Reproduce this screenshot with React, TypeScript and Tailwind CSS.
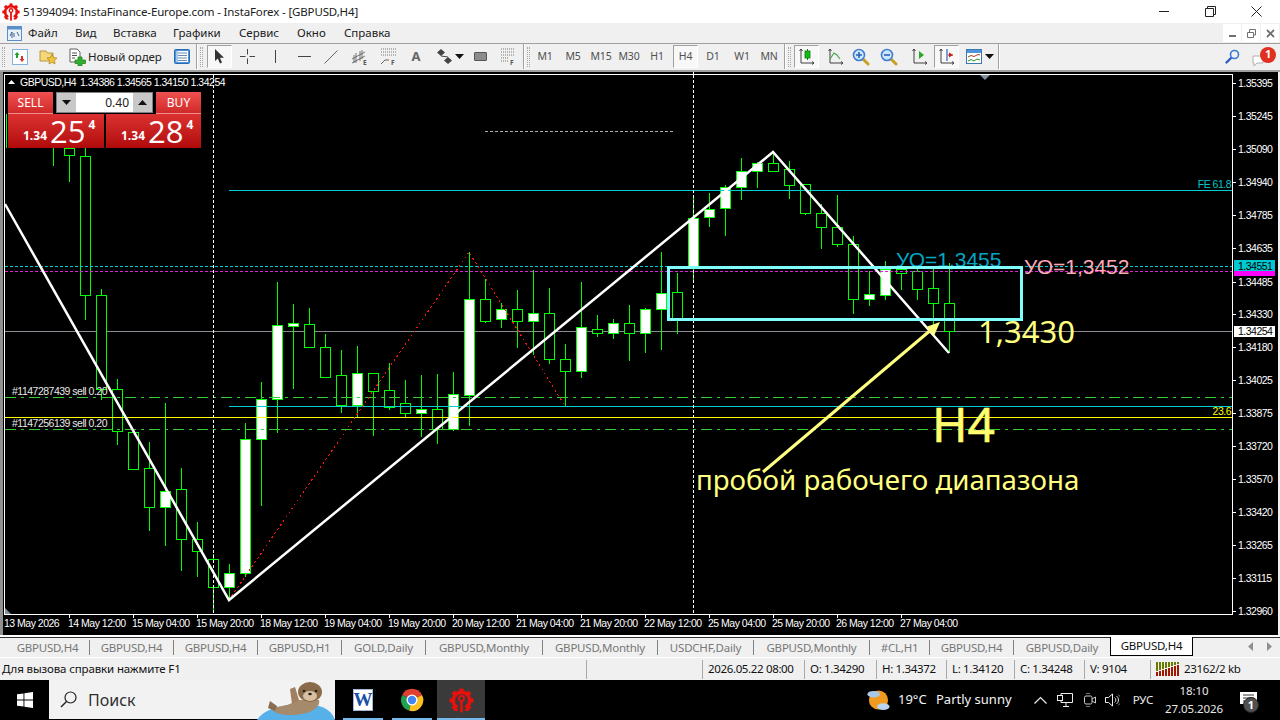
import type { ReactNode } from "react";

type Candle = [number, number, number, number, number, boolean];

// x, high, body top, body bottom, low, filled
const CANDLES: Candle[] = [
    [53, 148, 148, 148, 166, false],
    [69, 148, 148, 155, 182, false],
    [85, 148, 156, 295, 320, false],
    [101, 289, 295, 389, 400, false],
    [117, 379, 389, 431, 445, false],
    [133, 432, 432, 469, 470, false],
    [149, 442, 468, 507, 531, false],
    [165, 403, 491, 507, 546, true],
    [181, 468, 489, 539, 571, false],
    [197, 522, 539, 551, 577, false],
    [213, 554, 559, 587, 610, false],
    [229, 564, 573, 587, 600, true],
    [245, 423, 439, 573, 577, true],
    [261, 382, 399, 439, 506, true],
    [277, 282, 325, 399, 433, true],
    [293, 304, 323, 326, 389, true],
    [309, 308, 324, 347, 348, false],
    [325, 334, 347, 377, 377, false],
    [341, 350, 375, 405, 413, false],
    [357, 346, 373, 405, 417, true],
    [373, 373, 373, 391, 436, false],
    [389, 363, 390, 407, 410, false],
    [405, 380, 403, 413, 417, false],
    [421, 375, 409, 413, 437, true],
    [437, 374, 409, 429, 444, false],
    [453, 372, 394, 429, 431, true],
    [469, 252, 299, 395, 426, true],
    [485, 279, 299, 321, 323, false],
    [501, 303, 309, 319, 328, true],
    [517, 290, 309, 321, 348, false],
    [533, 270, 313, 321, 355, true],
    [549, 288, 313, 359, 364, false],
    [565, 344, 359, 371, 406, false],
    [581, 282, 327, 371, 378, true],
    [597, 315, 329, 333, 337, false],
    [613, 319, 323, 333, 339, true],
    [629, 305, 323, 333, 361, false],
    [645, 308, 309, 333, 353, true],
    [661, 252, 293, 309, 350, true],
    [677, 273, 292, 319, 334, false],
    [693, 198, 218, 266, 281, true],
    [709, 193, 209, 217, 227, true],
    [725, 185, 187, 208, 236, true],
    [741, 158, 171, 187, 200, true],
    [757, 162, 163, 171, 188, true],
    [773, 152, 163, 171, 171, false],
    [789, 161, 169, 185, 199, false],
    [805, 184, 184, 213, 215, false],
    [821, 204, 213, 227, 249, false],
    [837, 195, 227, 244, 247, false],
    [853, 236, 244, 299, 314, false],
    [869, 271, 294, 299, 306, true],
    [885, 261, 269, 295, 300, true],
    [901, 268, 269, 273, 290, false],
    [917, 268, 271, 289, 300, false],
    [933, 269, 288, 303, 332, false],
    [949, 263, 303, 331, 353, false],
];

const PRICES: [string, number][] = [
    ["1.35395", 83],
    ["1.35245", 116],
    ["1.35090", 149],
    ["1.34940", 182],
    ["1.34785", 215],
    ["1.34635", 248],
    ["1.34485", 282],
    ["1.34330", 314],
    ["1.34180", 347],
    ["1.34025", 380],
    ["1.33875", 413],
    ["1.33720", 446],
    ["1.33570", 479],
    ["1.33420", 512],
    ["1.33265", 545],
    ["1.33115", 578],
    ["1.32960", 611],
];

const TIMES: [string, number][] = [
    ["13 May 2026", 4],
    ["14 May 12:00", 68],
    ["15 May 04:00", 132],
    ["15 May 20:00", 196],
    ["18 May 12:00", 260],
    ["19 May 04:00", 324],
    ["19 May 20:00", 388],
    ["20 May 12:00", 452],
    ["21 May 04:00", 516],
    ["21 May 20:00", 580],
    ["22 May 12:00", 644],
    ["25 May 04:00", 708],
    ["25 May 20:00", 772],
    ["26 May 12:00", 836],
    ["27 May 04:00", 900],
];

const TABS: [string, string][] = [
    ["GBPUSD,H4", "w-[84px]"],
    ["GBPUSD,H4", "w-[84px]"],
    ["GBPUSD,H4", "w-[84px]"],
    ["GBPUSD,H1", "w-[84px]"],
    ["GOLD,Daily", "w-[84px]"],
    ["GBPUSD,Monthly", "w-[117px]"],
    ["GBPUSD,Monthly", "w-[115px]"],
    ["USDCHF,Daily", "w-[96px]"],
    ["GBPUSD,Monthly", "w-[116px]"],
    ["#CL,H1", "w-[60px]"],
    ["GBPUSD,H4", "w-[84px]"],
];

const STATUS: [string, string][] = [
    ["2026.05.22 08:00", "w-[102px]"],
    ["O: 1.34290", "w-[72px]"],
    ["H: 1.34372", "w-[70px]"],
    ["L: 1.34120", "w-[68px]"],
    ["C: 1.34248", "w-[70px]"],
    ["V: 9104", "w-[66px]"],
];

const MENU: [string, string][] = [
    ["Файл", "w-[47px]"],
    ["Вид", "w-[38px]"],
    ["Вставка", "w-[60px]"],
    ["Графики", "w-[66px]"],
    ["Сервис", "w-[58px]"],
    ["Окно", "w-[47px]"],
    ["Справка", "w-[60px]"],
];

const TIMEFRAMES: [string, string][] = [
    ["M1", "w-[28px]"],
    ["M5", "w-[28px]"],
    ["M15", "w-[28px]"],
    ["M30", "w-[28px]"],
    ["H1", "w-[28px]"],
];

function Slot({ className, children }: { className: string; children?: ReactNode }) {
    return <div className={"flex h-full shrink-0 items-center justify-center " + className}>{children}</div>;
}

function Grip() {
    return <div className="h-[20px] w-[3px] border-x border-dotted border-[#a8a8a8]" />;
}

function Sep() {
    return <div className="h-full w-[2px] shrink-0 border-l border-r border-l-[#a0a0a0] border-r-white" />;
}

function Pressed({ children, className }: { children: ReactNode; className: string }) {
    return (
        <div className={"flex h-[23px] w-[25px] shrink-0 items-center justify-center border border-t-[#a0a0a0] border-l-[#a0a0a0] border-r-white border-b-white bg-[#f8f8f8] " + className}>
            {children}
        </div>
    );
}

function Gear({ size }: { size: number }) {
    return (
        <svg width={size} height={size} viewBox="0 0 24 24">
            {[0, 45, 90, 135, 225, 270, 315].map((a) => (
                <rect key={a} x="10" y="0.500" width="4" height="5.500" fill="#e8100c" transform={`rotate(${a} 12 12)`} />
            ))}
            <path d="M7.200 18.500 A8 8 0 1 1 16.800 18.500" fill="none" stroke="#e8100c" strokeWidth="3.200" />
            <circle cx="12" cy="10" r="2.400" fill="none" stroke="#e8100c" strokeWidth="1.800" />
            <rect x="10.800" y="12" width="2.400" height="11.500" fill="#e8100c" />
            <path d="M5 21H8.500M15.500 21H19" stroke="#e8100c" strokeWidth="2.200" />
        </svg>
    );
}

function Caret({ up = false }: { up?: boolean }) {
    return (
        <svg width="9" height="5" viewBox="0 0 9 5">
            <path d={up ? "M4.500 0 9 5H0Z" : "M0 0H9L4.500 5Z"} fill="#111" />
        </svg>
    );
}

function ZoomIcon({ plus }: { plus: boolean }) {
    return (
        <svg width="18" height="18" viewBox="0 0 18 18">
            <path d="M10.500 10.500 16 16" stroke="#c8a020" strokeWidth="3" strokeLinecap="round" />
            <circle cx="7" cy="7" r="5.500" fill="#cfe6fa" stroke="#3f7fd0" strokeWidth="1.600" />
            <path d={plus ? "M4 7H10M7 4V10" : "M4 7H10"} stroke="#2a62b8" strokeWidth="1.600" />
        </svg>
    );
}

function Axes({ children }: { children?: ReactNode }) {
    return (
        <svg width="17" height="17" viewBox="0 0 17 17">
            <path d="M3 1V15H16M1.500 3 3 1 4.500 3M14 13.500 16 15 14 16.500" fill="none" stroke="#404040" strokeWidth="1" />
            {children}
        </svg>
    );
}

function Toolbar() {
    const tf = "text-[10.500px] tracking-[-0.200px] text-[#505050]";
    return (
        <div className="flex h-[28px] shrink-0 items-center border-b-2 border-b-[#a0a0a0] bg-[#f0f0f0] pb-[1px] pl-[4px] text-[11.500px] tracking-[-0.100px] text-[#222]">
            <div className="-ml-[2px] mr-[-1px] flex h-full items-center"><Grip /></div>
            <Slot className="w-[32px]">
                <svg width="16" height="16" viewBox="0 0 16 16">
                    <rect x="0.500" y="0.500" width="15" height="15" fill="#fff" stroke="#7fb4e0" />
                    <path d="M5 3 2.500 6H4V9H6V6H7.500Z" fill="#24a024" />
                    <path d="M10 13 12.500 10H11V7H9V10H7.500Z" fill="#d83030" />
                </svg>
            </Slot>
            <Slot className="w-[24px]">
                <svg width="19" height="17" viewBox="0 0 19 17">
                    <path d="M1 3H7L8.500 5H14V13H1Z" fill="#f3d77a" stroke="#b89840" />
                    <path d="M13 6 14.500 9.500 18 10 15.500 12.500 16 16 13 14.300 10 16 10.500 12.500 8 10 11.500 9.500Z" fill="#f2c23a" stroke="#a88420" strokeWidth="0.700" />
                </svg>
            </Slot>
            <Slot className="w-[108px] justify-start pl-[9px]">
                <svg width="17" height="18" viewBox="0 0 17 18" className="mr-[2px] shrink-0">
                    <path d="M1 1H8L11 4V14H1Z" fill="#fff" stroke="#606060" />
                    <path d="M3 5H8M3 7.500H8M3 10H6" stroke="#505050" />
                    <path d="M9 9H13V12H16.500V15.500H13V18H9V15.500H6V12H9Z" fill="#30b030" stroke="#1a7a1a" strokeWidth="0.700" />
                </svg>
                <span className="whitespace-nowrap">Новый ордер</span>
            </Slot>
            <Slot className="w-[28px]">
                <svg width="16" height="15" viewBox="0 0 16 15">
                    <rect x="0.500" y="0.500" width="15" height="14" rx="1" fill="#4f93d8" stroke="#2a6ab0" />
                    <rect x="2" y="2" width="12" height="11" fill="#fff" />
                    <path d="M4 4H13M4 6.500H13M4 9H13M4 11.500H13" stroke="#6a8ab0" />
                    <path d="M3 2V13" stroke="#4f93d8" />
                </svg>
            </Slot>
            <Sep />
            <Slot className="w-[6px]"><Grip /></Slot>
            <Pressed className="ml-[3px]">
                <svg width="11" height="15" viewBox="0 0 11 15">
                    <path d="M1 0V12L3.800 9.500 6 14.500 8 13.500 6 8.800H10Z" fill="#333" />
                </svg>
            </Pressed>
            <Slot className="w-[30px]">
                <svg width="15" height="15" viewBox="0 0 15 15">
                    <path d="M7.500 0V5.500M7.500 9.500V15M0 7.500H5.500M9.500 7.500H15" stroke="#444" />
                </svg>
            </Slot>
            <Slot className="w-[26px]"><div className="h-[13px] w-[1px] bg-[#444]" /></Slot>
            <Slot className="w-[32px]"><div className="h-[1px] w-[13px] bg-[#444]" /></Slot>
            <Slot className="w-[22px]">
                <svg width="14" height="14" viewBox="0 0 14 14"><path d="M0.500 13.500 13.500 0.500" stroke="#666" /></svg>
            </Slot>
            <Slot className="w-[36px]">
                <svg width="18" height="18" viewBox="0 0 18 18">
                    <path d="M1 11 14 4M1 15 14 8M5 5V15M9 3V13M3 7V15M11 2V11" stroke="#555" strokeWidth="0.800" />
                    <text x="12" y="17" fontSize="6.500" fontWeight="700" fill="#555">E</text>
                </svg>
            </Slot>
            <Slot className="w-[20px]">
                <svg width="17" height="18" viewBox="0 0 17 18">
                    <path d="M1 1H16M1 4H16M1 7H16" stroke="#777" strokeDasharray="1 1" />
                    <path d="M1 16 5 12H9" fill="none" stroke="#666" />
                    <text x="11" y="17" fontSize="6.500" fontWeight="700" fill="#555">F</text>
                </svg>
            </Slot>
            <Slot className="w-[36px]"><span className="text-[13px] font-bold text-[#666]">A</span></Slot>
            <Slot className="w-[20px]">
                <svg width="15" height="15" viewBox="0 0 15 15">
                    <path d="M4 0 8 3.500 4 7 0 3.500ZM11 8 15 11.500 11 15 7 11.500Z" fill="#444" />
                    <path d="M4 7 11 8" stroke="#444" />
                </svg>
            </Slot>
            <Slot className="w-[10px]"><Caret /></Slot>
            <Slot className="w-[32px]"><div className="h-[9px] w-[13px] rounded-[1px] border border-[#555] bg-[#8c8c8c]" /></Slot>
            <Slot className="w-[24px]">
                <svg width="15" height="18" viewBox="0 0 15 18">
                    <path d="M0 1H14M0 4H14M0 7H14M0 10H8M0 13H8" stroke="#777" strokeDasharray="1 1" />
                    <text x="9" y="17" fontSize="6.500" fontWeight="700" fill="#555">F</text>
                </svg>
            </Slot>
            <div className="w-[3px] shrink-0" />
            <Sep />
            <Slot className="w-[6px]"><Grip /></Slot>
            {TIMEFRAMES.map(([label, w]) => (
                <Slot key={label} className={w}><span className={tf}>{label}</span></Slot>
            ))}
            <Pressed className="ml-[2px]"><span className={tf}>H4</span></Pressed>
            <Slot className="w-[30px]"><span className={tf}>D1</span></Slot>
            <Slot className="w-[28px]"><span className={tf}>W1</span></Slot>
            <Slot className="w-[26px]"><span className={tf}>MN</span></Slot>
            <div className="w-[2px] shrink-0" />
            <Sep />
            <Slot className="w-[6px]"><Grip /></Slot>
            <Pressed className="ml-[2px]">
                <Axes>
                    <path d="M9.500 1V12" stroke="#108010" />
                    <rect x="7" y="3" width="5" height="7" fill="#10c010" stroke="#107010" strokeWidth="0.800" />
                </Axes>
            </Pressed>
            <Slot className="w-[32px]">
                <Axes><path d="M3 11 7 5 10 7 13 11" fill="none" stroke="#48a848" strokeWidth="1.200" /></Axes>
            </Slot>
            <Slot className="w-[20px]"><ZoomIcon plus /></Slot>
            <Slot className="w-[36px]"><ZoomIcon plus={false} /></Slot>
            <Slot className="w-[24px]">
                <Axes><path d="M8 3V11L13 7Z" fill="#2aa82a" /></Axes>
            </Slot>
            <Pressed className="ml-[3px]">
                <Axes>
                    <path d="M9 1V13" stroke="#2a62b8" strokeWidth="1.200" />
                    <path d="M15 7 11 4.500V9.500Z" fill="#c82020" />
                    <path d="M15 7H10" stroke="#c82020" />
                </Axes>
            </Pressed>
            <Slot className="w-[30px]">
                <svg width="16" height="15" viewBox="0 0 16 15">
                    <rect x="0.500" y="0.500" width="15" height="14" fill="#fff" stroke="#3a78b8" />
                    <rect x="1" y="1" width="14" height="3" fill="#4f93d8" />
                    <path d="M2 8 5 6.500 8 7.500 12 5.500 14 6" fill="none" stroke="#a04020" />
                    <path d="M2 12 5 10.500 8 12 11 10 14 11" fill="none" stroke="#309030" />
                </svg>
            </Slot>
            <Slot className="-ml-[5px] w-[10px]"><Caret /></Slot>
            <div className="w-[4px] shrink-0" />
            <Sep />
            <Slot className="ml-auto w-[16px]">
                <svg width="15" height="15" viewBox="0 0 15 15">
                    <path d="M6 9 1.500 13.500" stroke="#2a5fc0" strokeWidth="2.400" strokeLinecap="round" />
                    <circle cx="9.500" cy="5.500" r="4" fill="none" stroke="#3a78d8" strokeWidth="1.600" />
                </svg>
            </Slot>
            <Slot className="ml-[11px] mr-[4px] w-[25px]">
                <div className="relative h-[22px] w-[25px]">
                    <svg width="14" height="14" viewBox="0 0 14 14" className="absolute bottom-[0px] left-[0px]">
                        <path d="M2 2H12V9H6L3 12V9H2Z" fill="#fff" stroke="#b0b0b0" />
                    </svg>
                    <div className="absolute right-[0px] top-[1px] flex h-[16px] w-[16px] items-center justify-center rounded-full bg-[#e03020] text-[11px] font-bold text-white">1</div>
                </div>
            </Slot>
        </div>
    );
}

function Chart() {
    const tx = "font-['Liberation_Sans',sans-serif] text-[10.500px] tracking-[-0.500px]";
    return (
        <svg width="1280" height="563" viewBox="0 72 1280 563" className="block">
            <rect x="0" y="72" width="1280" height="563" fill="#000" />
            <rect x="0" y="72" width="3" height="563" fill="#909090" />
            <rect x="1278" y="72" width="2" height="563" fill="#f0f0f0" />

            <g shapeRendering="crispEdges">
                <rect x="4.500" y="74.500" width="1228" height="540" fill="none" stroke="#fff" />
                {PRICES.map(([, y]) => (
                    <rect key={y} x="1233" y={y} width="3" height="1" fill="#fff" />
                ))}
                {TIMES.slice(1).map(([, x]) => (
                    <rect key={x} x={x + 1} y="614" width="1" height="4" fill="#fff" />
                ))}
                <rect x="693" y="72" width="1" height="3" fill="#fff" />
                <rect x="5" y="331" width="1227" height="1" fill="#8a8a92" />
                <rect x="6" y="114" width="1" height="34" fill="#00ff00" />

                {CANDLES.map(([x, hi, top, bottom, lo, filled]) => (
                    <g key={x}>
                        <path d={`M${x + 0.5} ${hi}V${lo}`} stroke="#00ff00" />
                        {bottom > top && (
                            <rect x={x - 4.5} y={top + 0.5} width="10" height={bottom - top} fill={filled ? "#fff" : "#000"} stroke="#00ff00" />
                        )}
                    </g>
                ))}

                <path d="M5 266.500H1232" stroke="#00ced1" strokeDasharray="3 2" />
                <path d="M5 271.500H1232" stroke="#e020e0" strokeDasharray="3 2" />
                <path d="M5 397.500H1232M5 429.500H1232" stroke="#32cd32" strokeDasharray="11 5 3 5" />
                <path d="M5 417.500H1232" stroke="#ffff00" />
                <path d="M229 190.500H1232M229 406.500H1232" stroke="#00ced1" />
                <path d="M213.500 75V614M693.500 75V614" stroke="#fff" strokeDasharray="3 2" />
                <path d="M485 131.500H674" stroke="#b0b0b0" strokeDasharray="3 2" />
                <path d="M229 600 469 252 565 406" fill="none" stroke="#ff1010" strokeDasharray="2 3" />
            </g>

            <path d="M5 204 229 600 773 152 949 353" fill="none" stroke="#fff" strokeWidth="2.500" />

            <text x="896" y="267" className="font-['Liberation_Sans',sans-serif] text-[21px]" fill="#00a8c4">УО=1,3455</text>
            <text x="1024" y="274" className="font-['Liberation_Sans',sans-serif] text-[21px]" fill="#ffa8b8">УО=1,3452</text>

            <rect x="668.500" y="267.500" width="353" height="51.500" fill="none" stroke="#80ffff" strokeWidth="3" shapeRendering="crispEdges" />

            <path d="M763 472 932 329" stroke="#ffff80" strokeWidth="3" />
            <path d="M940 322 926 327 934 336Z" fill="#ffff80" />

            <text x="978" y="343" className="font-['Noto_Sans',sans-serif] text-[31px]" fill="#ffff80">1,3430</text>
            <text x="932" y="442" stroke="#ffff70" strokeWidth="0.500" className="font-['Noto_Sans',sans-serif] text-[48px]" fill="#ffff70">H4</text>
            <text x="696" y="490" className="font-['Noto_Sans',sans-serif] text-[27.700px]" fill="#ffff80">пробой рабочего диапазона</text>

            <path d="M8 84 11.500 80 15 84Z" fill="#fff" />
            <text x="20" y="86" className={tx} fill="#fff">GBPUSD,H4</text>
            <text x="80" y="86" className={tx} fill="#fff">1.34386 1.34565 1.34150 1.34254</text>
            <text x="12" y="395" className={tx} fill="#e8e8e8">#1147287439 sell 0.20</text>
            <text x="12" y="427" className={tx} fill="#e8e8e8">#1147256139 sell 0.20</text>
            <text x="1231" y="188" textAnchor="end" className={tx} fill="#00c8cc">FE 61.8</text>
            <text x="1231" y="415" textAnchor="end" className={tx} fill="#ffff00">23.6</text>

            {PRICES.map(([p, y]) => (
                <text key={p} x="1238" y={y + 4} className={tx} fill="#fff">{p}</text>
            ))}
            {TIMES.map(([t, x]) => (
                <text key={t} x={x} y="627" className={tx} fill="#fff">{t}</text>
            ))}

            <rect x="1234" y="266" width="41" height="10" fill="#ff00ff" />
            <rect x="1234" y="260" width="41" height="11" fill="#00c8d0" />
            <text x="1238" y="270" className={tx} fill="#000">1.34551</text>
            <rect x="1234" y="326" width="41" height="11" fill="#fff" />
            <text x="1238" y="335" className={tx} fill="#000">1.34254</text>

            <path d="M980 75H990L985 80Z" fill="#8090a0" />
            <path d="M5 608 11 614H5Z" fill="#8090a0" />
        </svg>
    );
}

function PriceBlock({ big, className }: { big: string; className: string }) {
    return (
        <div className={"flex h-[34px] items-center bg-gradient-to-b from-[#dc3030] to-[#b00808] font-['Open_Sans',sans-serif] text-white " + className}>
            <span className="mt-[10px] text-[12px] font-bold">1.34</span>
            <span className="ml-[3px] text-[31px] leading-none">{big}</span>
            <span className="mb-[12px] ml-[3px] text-[12px] font-bold">4</span>
        </div>
    );
}

function TradePanel() {
    const side = "flex h-[22px] w-[45px] items-start justify-center border-b border-b-[#f09090] bg-gradient-to-b from-[#f05050] to-[#d02828] pt-[2px] text-[12px] text-white";
    return (
        <div className="absolute left-[8px] top-[20px] flex w-[193px] flex-col">
            <div className="flex h-[22px] items-start justify-between">
                <div className={side}>SELL</div>
                <div className="flex h-[21px] w-[97px] items-center border border-[#808080] bg-[#c8c8c8]">
                    <div className="flex h-full w-[19px] items-center justify-center"><Caret /></div>
                    <div className="flex h-full flex-1 items-center justify-end bg-white pr-[4px] text-[12px] text-[#222]">0.40</div>
                    <div className="flex h-full w-[19px] items-center justify-center"><Caret up /></div>
                </div>
                <div className={side}>BUY</div>
            </div>
            <div className="flex justify-between">
                <PriceBlock big="25" className="w-[96px] pl-[15px]" />
                <PriceBlock big="28" className="w-[95px] pl-[15px]" />
            </div>
        </div>
    );
}

function Otter() {
    return (
        <svg width="78" height="40" viewBox="0 0 78 40" className="ml-auto shrink-0">
            <path d="M0 40C6 30 24 24 46 24C62 24 74 28 78 40Z" fill="#58b0e8" />
            <path d="M14 28C24 26 32 26 40 20L62 20C64 28 52 35 34 35C24 35 18 34 14 28Z" fill="#a58a6c" />
            <path d="M13 21 20 26 18 31 11 28Z" fill="#8a6c4e" />
            <path d="M33 9 38 7 42 20 35 24Z" fill="#a08060" />
            <ellipse cx="53" cy="12" rx="12" ry="10" fill="#8a6a48" />
            <ellipse cx="53" cy="16" rx="7" ry="5" fill="#d8c0a0" />
            <circle cx="47" cy="11" r="1.300" fill="#222" />
            <circle cx="59" cy="11" r="1.300" fill="#222" />
            <ellipse cx="53" cy="14" rx="1.800" ry="1.200" fill="#222" />
        </svg>
    );
}

function Taskbar() {
    return (
        <div className="flex h-[40px] shrink-0 items-stretch bg-black text-white">
            <Slot className="w-[49px]">
                <svg width="16" height="16" viewBox="0 0 16 16">
                    <path d="M0 2.300 6.500 1.400V7.600H0ZM7.400 1.300 16 0V7.600H7.400ZM0 8.400H6.500V14.600L0 13.700ZM7.400 8.400H16V16L7.400 14.700Z" fill="#fff" />
                </svg>
            </Slot>
            <div className="flex h-[39px] w-[286px] shrink-0 items-center bg-[#f2f2f2] pl-[11px] text-[16px] text-[#303030]">
                <svg width="17" height="17" viewBox="0 0 17 17" className="shrink-0">
                    <circle cx="10.500" cy="6.500" r="5.500" fill="none" stroke="#222" strokeWidth="1.200" />
                    <path d="M6.500 10.500 1 16" stroke="#222" strokeWidth="1.400" />
                </svg>
                <span className="ml-[11px]">Поиск</span>
                <Otter />
            </div>
            <div className="w-[8px] shrink-0" />
            <Slot className="relative w-[40px]">
                <div className="flex h-[22px] w-[20px] items-center justify-center border border-[#a0b8d8] bg-white font-['Liberation_Serif',serif] text-[19px] font-bold text-[#1a50a8]">W</div>
                <div className="absolute bottom-[0px] left-[0px] right-[0px] h-[2px] bg-[#76b9ed]" />
            </Slot>
            <div className="w-[9px] shrink-0" />
            <Slot className="relative w-[40px]">
                <svg width="24" height="24" viewBox="0 0 24 24">
                    <path d="M12 12 2.200 7A11 11 0 0 1 22 7Z" fill="#e04030" />
                    <path d="M12 12 2.200 7A11 11 0 0 0 9 22.600Z" fill="#20a050" />
                    <path d="M12 12 22 7A11 11 0 0 1 9 22.600Z" fill="#fbc020" />
                    <circle cx="12" cy="12" r="5.500" fill="#fff" />
                    <circle cx="12" cy="12" r="4.200" fill="#4285f4" />
                </svg>
                <div className="absolute bottom-[0px] left-[0px] right-[0px] h-[2px] bg-[#76b9ed]" />
            </Slot>
            <div className="w-[5px] shrink-0" />
            <Slot className="relative w-[48px] bg-[#3a3a3a]">
                <Gear size={25} />
                <div className="absolute bottom-[0px] left-[0px] right-[0px] h-[2px] bg-[#76b9ed]" />
            </Slot>
            <div className="flex-1" />
            <Slot className="w-[24px]">
                <svg width="25" height="26" viewBox="0 0 25 26">
                    <circle cx="13" cy="13" r="10" fill="#f09a20" />
                    <ellipse cx="8" cy="7" rx="6.500" ry="3.500" fill="#a8c8e8" />
                    <ellipse cx="18" cy="20" rx="6.500" ry="3.500" fill="#b8d4f0" />
                </svg>
            </Slot>
            <div className="w-[8px] shrink-0" />
            <div className="flex items-center text-[13px] text-[#f4f4f4]">
                <span className="w-[38px]">19°C</span>
                <span className="w-[98px] whitespace-nowrap">Partly sunny</span>
            </div>
            <Slot className="w-[13px]">
                <svg width="13" height="8" viewBox="0 0 13 8"><path d="M0.500 7.500 6.500 1.500 12.500 7.500" fill="none" stroke="#eee" strokeWidth="1.200" /></svg>
            </Slot>
            <Slot className="ml-[10px] w-[16px]">
                <svg width="16" height="14" viewBox="0 0 16 14">
                    <path d="M4 0.500H15.500V9.500H4ZM0.500 2.500H6M9 9.500V13M6 13.500H12" fill="none" stroke="#eee" />
                    <rect x="0.500" y="2.500" width="5" height="5" fill="#000" stroke="#eee" />
                </svg>
            </Slot>
            <Slot className="ml-[11px] w-[12px]">
                <svg width="12" height="16" viewBox="0 0 12 16">
                    <rect x="0.500" y="4" width="7.500" height="8" rx="1.500" fill="none" stroke="#ccc" />
                    <path d="M8 7 11.500 5V11L8 9" fill="none" stroke="#ccc" />
                    <path d="M2 1.500H6M2 14.500H6" stroke="#777" />
                </svg>
            </Slot>
            <Slot className="ml-[9px] w-[15px]">
                <svg width="15" height="14" viewBox="0 0 15 14">
                    <path d="M0.500 4.500H3.500L7.500 1V13L3.500 9.500H0.500Z" fill="none" stroke="#eee" />
                    <path d="M9.500 4.500A3 3 0 0 1 9.500 9.500M11.500 3A5 5 0 0 1 11.500 11" fill="none" stroke="#ddd" />
                    <path d="M13.300 1.500A7 7 0 0 1 13.300 12.500" fill="none" stroke="#777" />
                </svg>
            </Slot>
            <Slot className="ml-[12px] w-[22px] text-[11.500px] text-[#e8e8e8]">РУС</Slot>
            <div className="ml-[9px] flex w-[62px] shrink-0 flex-col items-center justify-center text-[11.500px] leading-[18px] tracking-[-0.100px] text-[#e8e8e8]">
                <span>18:10</span>
                <span>27.05.2026</span>
            </div>
            <Slot className="relative ml-[13px] mr-[22px] w-[20px]">
                <svg width="17" height="16" viewBox="0 0 17 16">
                    <path d="M0 0H17V12H8L5 15V12H0Z" fill="#fff" />
                    <path d="M3 3H14M3 6H14M3 9H10" stroke="#333" />
                </svg>
                <div className="absolute bottom-[7px] right-[-1px] flex h-[16px] w-[16px] items-center justify-center rounded-full border border-[#222] bg-[#505050] text-[11px] font-bold text-white">1</div>
            </Slot>
        </div>
    );
}

export default function App() {
    return (
        <div className="flex h-[720px] w-[1280px] flex-col overflow-hidden bg-[#f0f0f0] font-['Noto_Sans',sans-serif]">
            {/* Title bar */}
            <div className="flex h-[23px] shrink-0 items-center bg-white pl-[2px] text-[11.500px] tracking-[-0.140px] text-[#202020]">
                <Gear size={18} />
                <span className="ml-[3px] whitespace-nowrap">51394094: InstaFinance-Europe.com - InstaForex - [GBPUSD,H4]</span>
                <Slot className="ml-auto w-[46px]"><div className="h-[1px] w-[10px] bg-[#222]" /></Slot>
                <Slot className="w-[46px]">
                    <svg width="11" height="11" viewBox="0 0 11 11"><path d="M0.500 2.500H8.500V10.500H0.500ZM2.500 2.500V0.500H10.500V8.500H8.500" fill="none" stroke="#222" /></svg>
                </Slot>
                <Slot className="w-[47px]">
                    <svg width="11" height="11" viewBox="0 0 11 11"><path d="M0.500 0.500 10.500 10.500M10.500 0.500 0.500 10.500" stroke="#222" /></svg>
                </Slot>
            </div>

            {/* Menu */}
            <div className="flex h-[21px] shrink-0 items-center border-b border-b-[#a0a0a0] bg-[#f0f0f0] text-[11.500px] text-[#202020]">
                <Slot className="w-[28px]">
                    <svg width="15" height="15" viewBox="0 0 15 15">
                        <rect x="0.500" y="0.500" width="14" height="14" fill="#e8f0fa" stroke="#5a8ec8" />
                        <rect x="1" y="1" width="13" height="2.500" fill="#5a8ec8" />
                        <path d="M3 10 5 6V12M7 7V11M10 6 12 10" fill="none" stroke="#40608a" />
                    </svg>
                </Slot>
                {MENU.map(([label, w]) => (
                    <div key={label} className={"shrink-0 " + w}>{label}</div>
                ))}
                <div className="ml-auto flex h-[18px] items-center gap-[1px] pr-[1px]">
                    <Slot className="w-[18px] bg-white"><div className="mt-[5px] h-[2px] w-[7px] bg-[#707070]" /></Slot>
                    <Slot className="w-[18px] bg-white">
                        <svg width="9" height="9" viewBox="0 0 9 9"><path d="M0.500 3.500H6.500V8.500H0.500ZM2.500 3V0.500H8.500V6H7" fill="none" stroke="#707070" /></svg>
                    </Slot>
                    <Slot className="w-[18px] bg-white">
                        <svg width="9" height="9" viewBox="0 0 9 9"><path d="M1 1 8 8M8 1 1 8" stroke="#707070" strokeWidth="1.800" /></svg>
                    </Slot>
                </div>
            </div>

            <Toolbar />

            {/* Chart */}
            <div className="relative h-[563px] shrink-0">
                <Chart />
                <TradePanel />
            </div>

            {/* Tabs */}
            <div className="h-[2px] shrink-0 bg-white" />
            <div className="flex h-[20px] shrink-0 items-start border-t border-t-[#303030] bg-[#f0f0f0] pl-[6px] text-[11.500px] tracking-[-0.220px] text-[#777]">
                {TABS.map(([label, w], i) => (
                    <div key={i} className={"mt-[2px] flex h-[15px] shrink-0 items-center justify-center border-r border-r-[#808080] " + w}>{label}</div>
                ))}
                <div className="w-[96px] shrink-0 pt-[1px] text-center">GBPUSD,Daily</div>
                <div className="-mt-[1px] flex h-[19px] w-[83px] shrink-0 items-center justify-center border-x border-b border-x-black border-b-black bg-white text-[#111]">GBPUSD,H4</div>
                <div className="ml-auto flex items-center gap-[14px] pr-[8px] pt-[4px]">
                    <svg width="5" height="9" viewBox="0 0 5 9"><path d="M5 0V9L0 4.500Z" fill="#909090" /></svg>
                    <svg width="5" height="9" viewBox="0 0 5 9"><path d="M0 0V9L5 4.500Z" fill="#909090" /></svg>
                </div>
            </div>

            {/* Status bar */}
            <div className="flex h-[23px] shrink-0 items-center border-t border-t-white bg-[#f0f0f0] text-[11.500px] text-[#111]">
                <div className="w-[586px] shrink-0 pl-[2px] tracking-[-0.130px]">Для вызова справки нажмите F1</div>
                <div className="h-[19px] w-[116px] shrink-0 border-l border-l-[#a8a8a8]" />
                {STATUS.map(([label, w]) => (
                    <div key={label} className={"flex h-[19px] shrink-0 items-center whitespace-nowrap border-l border-l-[#a8a8a8] pl-[5px] tracking-[-0.350px] " + w}>{label}</div>
                ))}
                <div className="flex h-[19px] items-center whitespace-nowrap border-l border-l-[#a8a8a8] pl-[5px] tracking-[-0.350px]">
                    <svg width="24" height="14" viewBox="0 0 24 14" className="mr-[4px]">
                        {[0, 1, 2, 3, 4, 5, 6, 7].map((i) => (
                            <g key={i}>
                                <rect x={i * 3} y="0" width="2" height={9 - i} fill="#6c7a00" />
                                <rect x={i * 3} y={10 - i} width="2" height={4 + i} fill="#a01800" />
                            </g>
                        ))}
                    </svg>
                    23162/2 kb
                </div>
            </div>

            <Taskbar />
        </div>
    );
}
